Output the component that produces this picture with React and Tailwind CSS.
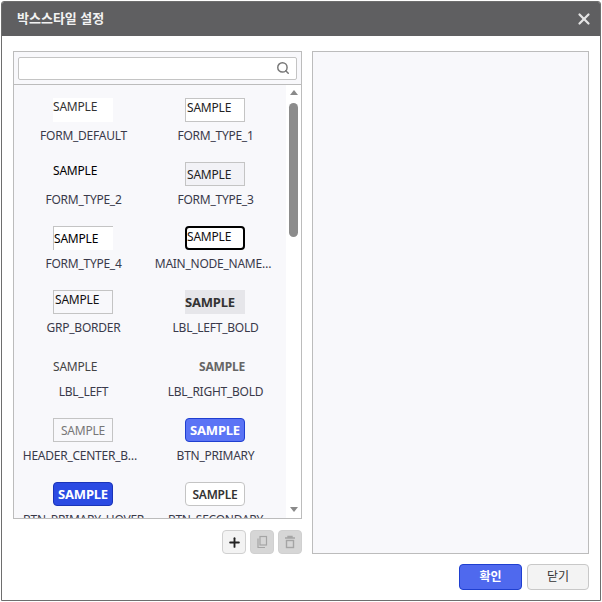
import { Plus, Search, X } from "lucide-react";

const styles = [
  { name: "FORM_DEFAULT", box: "bg-white text-[#333] items-start" },
  { name: "FORM_TYPE_1", box: "bg-white border border-[#c4c4c4] text-[#222] pl-px items-start" },
  { name: "FORM_TYPE_2", box: "text-black items-start" },
  { name: "FORM_TYPE_3", box: "bg-[#f2f2f6] border border-[#c4c4c4] text-[#222] pl-px pt-px items-center" },
  { name: "FORM_TYPE_4", box: "bg-white border-l border-t border-[#c4c4c4] text-black items-center" },
  { name: "MAIN_NODE_NAME_STYLE", box: "bg-white border-2 border-black rounded-[4px] text-[#111] items-start" },
  { name: "GRP_BORDER", box: "border border-[#c4c4c4] text-[#111] pl-px items-start" },
  { name: "LBL_LEFT_BOLD", box: "bg-[#e6e6ea] text-[#333] text-[13px] font-bold items-center" },
  { name: "LBL_LEFT", box: "text-[#444] pt-px items-center" },
  { name: "LBL_RIGHT_BOLD", box: "text-[#666] font-bold pt-px items-center justify-end" },
  { name: "HEADER_CENTER_BORDER", box: "border border-[#c4c4c4] text-[#777] pt-px items-center justify-center" },
  { name: "BTN_PRIMARY", box: "bg-[#5b74f5] border border-[#1f3fd0] rounded-[4px] text-white text-[13px] font-bold items-center justify-center" },
  { name: "BTN_PRIMARY_HOVER", box: "bg-[#2b4be3] border border-[#1a34b8] rounded-[4px] text-white text-[13px] font-bold items-center justify-center" },
  { name: "BTN_SECONDARY", box: "bg-white border border-[#c4c4c4] rounded-[4px] text-[#333] font-semibold pt-px items-center justify-center" },
];

function StyleItem({ item }) {
  return (
    <div className="h-16 flex flex-col items-center">
      <div className={`w-[60px] h-6 flex text-xs leading-[18px] tracking-[-0.2px] ${item.box}`}>SAMPLE</div>
      <div className="mt-1 ml-px w-[121.5px] truncate text-center text-xs leading-5 tracking-[-0.25px] text-[#3a3a4a]">{item.name}</div>
    </div>
  );
}

function ToolButton({ children, disabled }) {
  return (
    <button
      className={`w-6 h-6 flex items-center justify-center rounded-[4px] border border-[#d0d0d0] ${
        disabled ? "bg-[#d6d6d6] text-[#a5a5a5]" : "bg-[#f3f3f3] text-[#222]"
      }`}
    >
      {children}
    </button>
  );
}

export default function App() {
  return (
    <div className="w-[602px] h-[602px] p-px bg-white font-['Noto_Sans','Noto_Sans_CJK_KR',sans-serif]">
      <div className="w-[600px] h-[600px] flex flex-col border border-[#6e6e6e] rounded-t-[3px] overflow-hidden">
        <div className="h-[34px] shrink-0 flex items-center justify-between pl-[15px] pr-[7px] bg-[#5f5f61]">
          <span className="text-[13px] font-bold text-[#f2f2f2]">박스스타일 설정</span>
          <X size={18} strokeWidth={3} className="text-[#e4e4e4]" />
        </div>

        <div className="flex-1 flex flex-col px-[11px] pt-[15px] pb-[10px]">
          <div className="flex-1 flex gap-[10px]">
            <div className="w-[289px] flex flex-col">
              <div className="h-[468px] flex flex-col border border-[#bcbcbc] bg-[#f8f8fb]">
                <div className="h-[33px] shrink-0 flex items-center px-1 border-b border-[#bcbcbc]">
                  <div className="flex-1 h-[23px] flex items-center justify-end pr-[6px] bg-white border border-[#c4c4c4] rounded-[2px]">
                    <Search size={14} strokeWidth={2.5} className="text-[#777]" />
                  </div>
                </div>
                <div className="flex-1 flex min-h-0">
                  <div className="w-[272px] overflow-hidden pl-[3px] pr-[5px] pt-[13px]">
                    <div className="grid grid-cols-2">
                      {styles.map((item) => (
                        <StyleItem key={item.name} item={item} />
                      ))}
                    </div>
                  </div>
                  <div className="flex-1 flex flex-col items-center bg-white pt-[5px] pb-[6px]">
                    <div className="w-0 h-0 border-x-[4px] border-x-transparent border-b-[5px] border-b-[#8a8a8a]" />
                    <div className="mt-[8px] w-[9px] h-[134px] rounded-full bg-[#8c8c8c]" />
                    <div className="mt-auto w-0 h-0 border-x-[4px] border-x-transparent border-t-[5px] border-t-[#8a8a8a]" />
                  </div>
                </div>
              </div>
              <div className="mt-[11px] flex justify-end gap-[4px]">
                <ToolButton>
                  <Plus size={15} strokeWidth={3} />
                </ToolButton>
                <ToolButton disabled>
                  <svg width="14" height="14" viewBox="0 0 14 14" fill="none" stroke="currentColor" strokeWidth="1.2">
                    <rect x="5" y="1.5" width="6.5" height="8.5" />
                    <path d="M3 3.5v9h7" />
                  </svg>
                </ToolButton>
                <ToolButton disabled>
                  <svg width="14" height="14" viewBox="0 0 14 14" fill="none" stroke="currentColor" strokeWidth="1.4">
                    <path d="M2 3h10M5 3V1.5h4V3" />
                    <rect x="3.5" y="5.5" width="7" height="7" />
                  </svg>
                </ToolButton>
              </div>
            </div>
            <div className="w-[277px] border border-[#bcbcbc] bg-[#f8f8fb]" />
          </div>

          <div className="mt-[10px] flex justify-end gap-[5px]">
            <button className="w-[63px] h-[26px] rounded-[4px] border border-[#1f3fd0] bg-[#4f69ee] text-xs font-bold text-white">
              확인
            </button>
            <button className="w-[62px] h-[26px] rounded-[4px] border border-[#c8c8c8] bg-[#f3f3f3] text-xs text-[#333]">
              닫기
            </button>
          </div>
        </div>
      </div>
    </div>
  );
}
